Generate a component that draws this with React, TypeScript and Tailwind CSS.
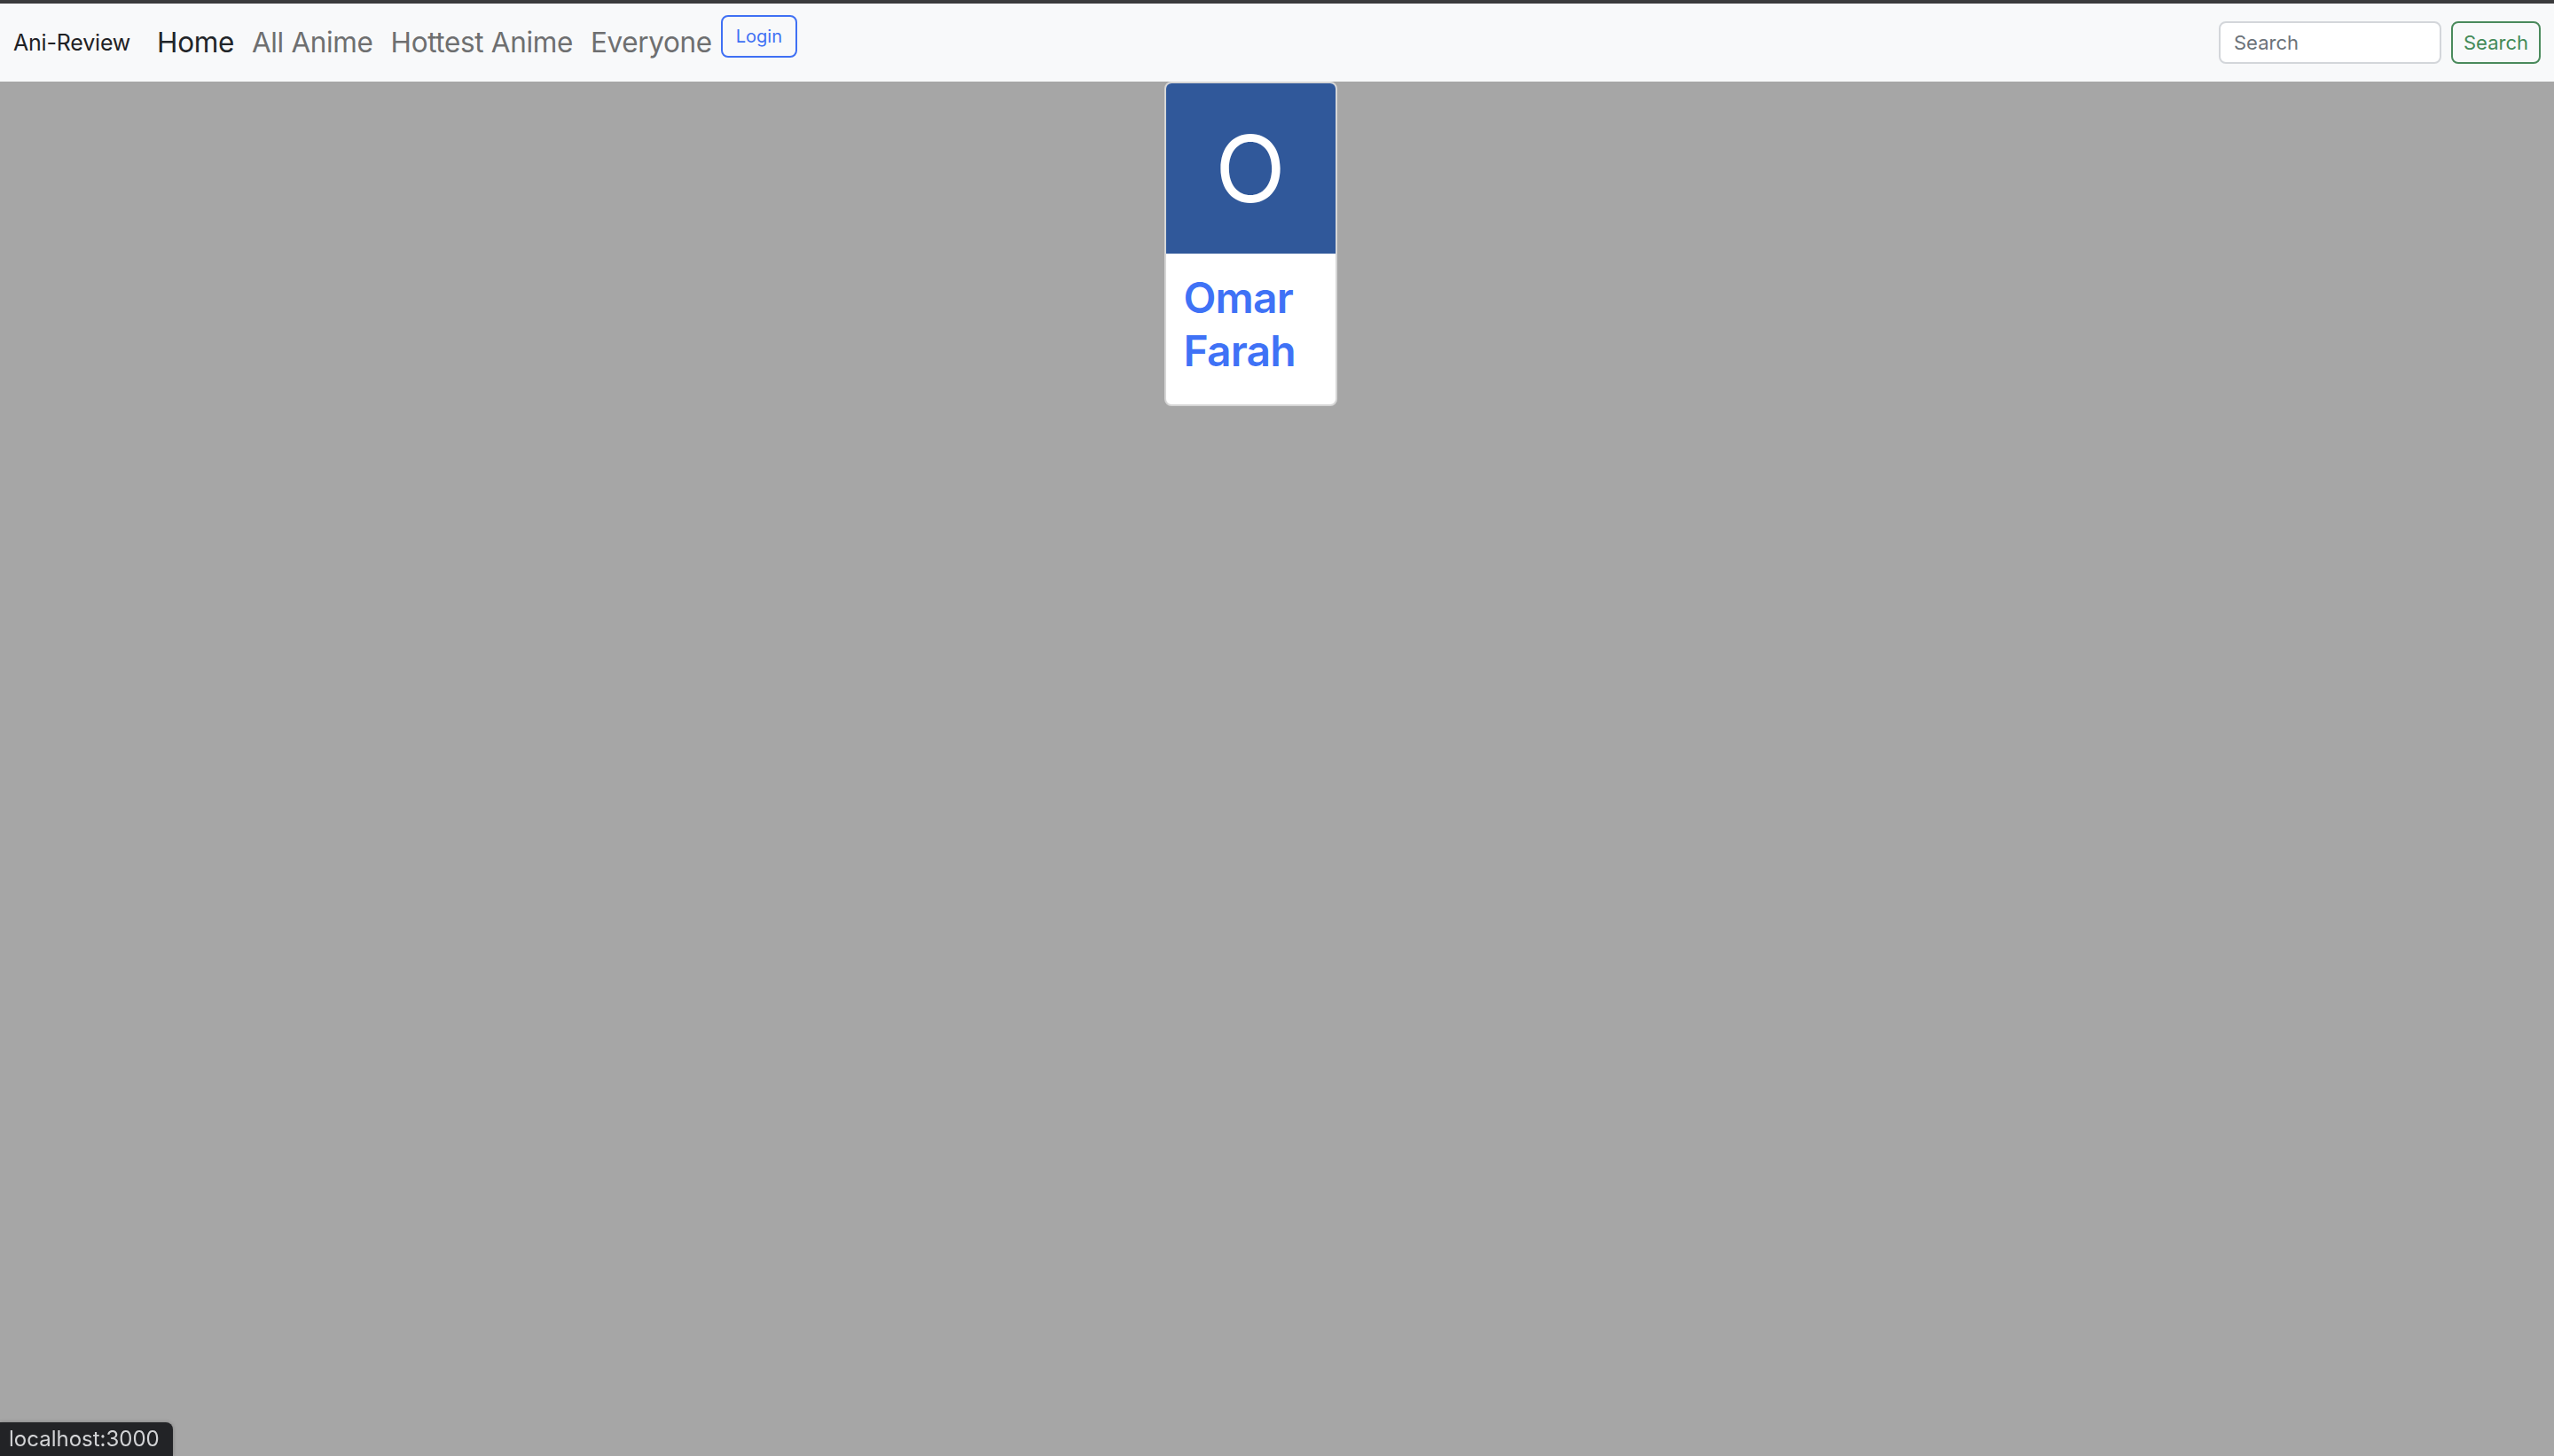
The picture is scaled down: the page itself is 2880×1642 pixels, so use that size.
import React from 'react';

const navLinks = [
  { label: 'Home', active: true },
  { label: 'All Anime', active: false },
  { label: 'Hottest Anime', active: false },
  { label: 'Everyone', active: false },
];

const users = [{ name: 'Omar Farah', initial: 'O' }];

export default function App() {
  return (
    <div
      className="min-h-screen w-full bg-[#a6a6a6] border-t-4 border-[#3b3b3d]"
      style={{ fontFamily: 'Inter, "Noto Sans", "Liberation Sans", sans-serif' }}
    >
      <nav className="flex h-[88px] items-center bg-[#f8f9fa] pl-[15px] pr-[15px]">
        <a className="text-[25px] leading-[40px] text-[#1f2225] tracking-[-0.2px]">Ani-Review</a>
        <ul className="ml-[30px] flex items-center">
          {navLinks.map(link => (
            <li key={link.label} className="mr-[20px] last:mr-[10px]">
              <a
                className={
                  'text-[31.5px] leading-[48px] tracking-[-0.35px] ' +
                  (link.active ? 'text-[#212529]' : 'text-[#6e6f70]')
                }
              >
                {link.label}
              </a>
            </li>
          ))}
        </ul>
        <button className="self-start mt-[13px] h-[48px] w-[86px] rounded-[8px] border-2 border-[#3f70f4] text-[20px] leading-[28px] text-[#3f70f4]">
          Login
        </button>

        <form className="ml-auto flex items-center gap-[11px]" onSubmit={e => e.preventDefault()}>
          <input
            type="search"
            placeholder="Search"
            className="h-[48px] w-[251px] rounded-[8px] border-2 border-[#d3d6da] bg-white px-[15px] text-[22px] text-[#212529] outline-none placeholder:text-[#6c737a]"
          />
          <button className="h-[48px] w-[101px] rounded-[8px] border-2 border-[#4a8a5c] text-[22px] text-[#438a58]">
            Search
          </button>
        </form>
      </nav>

      <main className="flex justify-center pr-[60px]">
        {users.map(u => (
          <div
            key={u.name}
            className="w-[195px] overflow-hidden rounded-[8px] border-2 border-[#d6d6d6] bg-white"
          >
            <div className="flex h-[192px] items-center justify-center bg-[#30589a]">
              <span className="text-[104px] leading-none font-normal text-white">{u.initial}</span>
            </div>
            <div className="px-[20px] pt-[20px] pb-[30px]">
              <h3 className="text-[48px] leading-[60px] font-semibold text-[#3f72f6] tracking-[-0.8px]">
                {u.name}
              </h3>
            </div>
          </div>
        ))}
      </main>

      <div className="fixed bottom-0 left-0 h-[38px] w-[195px] rounded-tr-[8px] bg-[#222326] pl-[10px] shadow-[0_0_4px_rgba(0,0,0,0.25)]">
        <span className="text-[24px] leading-[38px] text-[#d2d3d5]">localhost:3000</span>
      </div>
    </div>
  );
}
